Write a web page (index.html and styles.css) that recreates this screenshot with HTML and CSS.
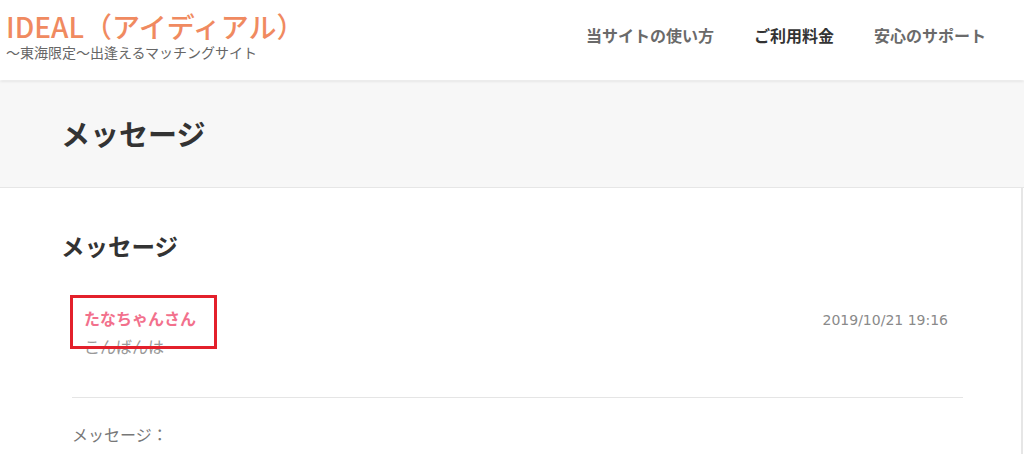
FILE: index.html
```html
<!DOCTYPE html>
<html lang="ja">
<head>
<meta charset="utf-8">
<title>メッセージ | IDEAL</title>
<link rel="stylesheet" href="styles.css">
</head>
<body>
<header class="site-header">
  <div class="brand">
    <div class="site-title">IDEAL（アイディアル）</div>
    <div class="tagline">～東海限定～出逢えるマッチングサイト</div>
  </div>
  <nav class="nav">
    <a class="nav-item">当サイトの使い方</a>
    <a class="nav-item current">ご利用料金</a>
    <a class="nav-item">安心のサポート</a>
  </nav>
</header>
<div class="page-band">
  <h1 class="page-title">メッセージ</h1>
</div>
<main class="card">
  <h2 class="card-title">メッセージ</h2>
  <div class="msg-list">
    <div class="msg">
      <div class="msg-head">
        <span class="msg-name">たなちゃんさん</span>
        <span class="msg-date">2019/10/21 19:16</span>
      </div>
      <p class="msg-body">こんばんは</p>
    </div>
  </div>
  <div class="form-label">メッセージ：</div>
</main>
<div class="highlight"></div>
</body>
</html>
```
FILE: styles.css
```css
* { box-sizing: border-box; }
html, body { margin: 0; padding: 0; }
body {
  width: 1024px;
  height: 454px;
  overflow: hidden;
  background: #fff;
  font-family: "Noto Sans CJK JP", "Noto Sans", sans-serif;
  color: #333;
  position: relative;
}
.site-header {
  height: 80px;
  display: flex;
  justify-content: space-between;
  align-items: flex-start;
  padding: 0 38px 0 6px;
  background: #fff;
  box-shadow: 0 1px 3px rgba(0,0,0,0.12);
  position: relative;
  z-index: 1;
}
.brand { padding-top: 9px; }
.site-title {
  font-size: 28px;
  line-height: 34px;
  font-weight: 500;
  color: #f08a60;
}
.tagline {
  font-size: 14px;
  line-height: 18px;
  color: #666;
}
.nav {
  display: flex;
  gap: 40px;
  padding-top: 23px;
}
.nav-item {
  font-size: 16px;
  line-height: 24px;
  font-weight: 700;
  color: #6a6a6a;
  text-decoration: none;
}
.nav-item.current { color: #333; }
.page-band {
  background: #f7f7f7;
  height: 107px;
  border-bottom: 1px solid #e6e6e6;
  margin-top: 1px;
  display: flex;
  align-items: center;
  padding-left: 61px;
}
.page-title {
  margin: 0;
  font-size: 29px;
  font-weight: 700;
  color: #333;
  line-height: 40px;
  padding-bottom: 3px;
}
.card {
  width: 1023px;
  height: 267px;
  border-right: 2px solid #e6e6e6;
  padding: 40px 58px 0 61px;
}
.card-title {
  margin: 0;
  font-size: 23.5px;
  font-weight: 700;
  line-height: 36px;
  color: #333;
}
.msg-list {
  margin: 42px 0 0 11px;
}
.msg {
  padding: 0 15px 39px 12px;
  border-bottom: 1px solid #e5e5e5;
}
.msg-head {
  display: flex;
  justify-content: space-between;
  align-items: baseline;
}
.msg-name {
  font-size: 16px;
  font-weight: 700;
  line-height: 24px;
  color: #f2708c;
}
.msg-date {
  font-family: "DejaVu Sans", Verdana, sans-serif;
  font-size: 14px;
  color: #8a8a8a;
}
.msg-body {
  margin: 4px 0 0;
  font-size: 16px;
  line-height: 24px;
  color: #999;
}
.form-label {
  margin: 24px 0 0 11px;
  font-size: 16px;
  line-height: 24px;
  color: #777;
}
.highlight {
  position: absolute;
  left: 70px;
  top: 295px;
  width: 147px;
  height: 54px;
  border: 3.5px solid #e3202b;
}
```
